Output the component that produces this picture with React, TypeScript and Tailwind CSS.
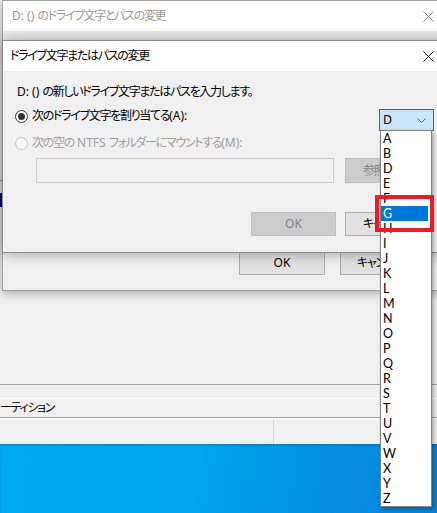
import React from "react";

const letters = ["A","B","D","E","F","G","H","I","J","K","L","M","N","O","P","Q","R","S","T","U","V","W","X","Y","Z"];

function J({ children }: { children: React.ReactNode }) {
  return <span className="tracking-[-1.3px]">{children}</span>;
}

function CloseX({ color }: { color: string }) {
  return (
    <svg width="11" height="11" viewBox="0 0 11 11" className="block">
      <path d="M0.5 0.5 L10.5 10.5 M10.5 0.5 L0.5 10.5" stroke={color} strokeWidth="1" fill="none" />
    </svg>
  );
}

function Radio({ checked, disabled }: { checked?: boolean; disabled?: boolean }) {
  if (disabled) {
    return <div className="w-[13px] h-[13px] rounded-full border border-[#c4c4c4] bg-[#f7f7f7] shrink-0" />;
  }
  return (
    <div className="w-[13px] h-[13px] rounded-full border border-[#333333] bg-white shrink-0 flex items-center justify-center">
      {checked && <div className="w-[7px] h-[7px] rounded-full bg-[#333333]" />}
    </div>
  );
}

export default function App() {
  return (
    <div className="relative w-[437px] h-[513px] overflow-hidden font-['Noto_Sans','Noto_Sans_CJK_JP',sans-serif] [font-feature-settings:'palt'] text-[12px] leading-[16px] text-black">
      {/* background: disk management window + desktop */}
      <div className="flex flex-col h-full">
        <div className="h-[444px] bg-[#f0f0f0] flex flex-col">
          <div className="h-[180px]" />
          <div className="h-px bg-[#a0a0a0]" />
          <div className="h-[12px]" />
          <div className="h-[14px] bg-[#0a0a7a]" />
          <div className="flex-1" />
          <div className="h-px bg-[#a0a0a0]" />
          <div className="h-[13px]" />
          <div className="h-px bg-white" />
          <div className="h-[18px] flex items-center"><J>ーティション</J></div>
          <div className="h-px bg-[#a0a0a0]" />
          <div className="h-px bg-white" />
          <div className="h-[25px] flex">
            <div className="w-[274px] border-r border-[#dadada]" />
          </div>
        </div>
        <div className="flex-1 bg-[linear-gradient(100deg,#00abf1_0%,#00a5ed_45%,#0a80d8_100%)] shadow-[inset_0_2px_2px_rgba(0,0,0,0.15)]" />
      </div>

      {/* outer dialog */}
      <div className="absolute left-[2px] top-0 w-[470px] h-[291px] border border-[#a3a3a3] bg-[#f0f0f0] shadow-[0_2px_10px_rgba(0,0,0,0.3)] flex flex-col">
        <div className="h-[30px] bg-white flex items-center pl-[9px] text-[#9a9a9a]">
          <span>D: () <J>のドライブ文字とパスの変更</J></span>
          <div className="ml-auto mr-[37px]">
            <CloseX color="#9a9a9a" />
          </div>
        </div>
        <div className="flex-1 flex items-end pb-[15px]">
          <div className="flex ml-[236px] gap-[15px]">
            <div className="w-[86px] h-[24px] border border-[#adadad] bg-[#e1e1e1] flex items-center justify-center">OK</div>
            <div className="w-[86px] h-[24px] border border-[#adadad] bg-[#e1e1e1] flex items-center pl-[16px]"><J>キャンセル</J></div>
          </div>
        </div>
      </div>

      {/* inner dialog */}
      <div className="absolute left-[2px] top-[40px] w-[461px] h-[213px] border border-[#8c8c8c] bg-[#f0f0f0] shadow-[0_0_14px_rgba(0,0,0,0.35)] flex flex-col">
        <div className="h-[30px] shrink-0 bg-white flex items-center pl-[7px]">
          <J>ドライブ文字またはパスの変更</J>
          <div className="ml-auto mr-[28px]">
            <CloseX color="#111111" />
          </div>
        </div>
        <div className="flex-1 flex flex-col pl-[12px] pt-[13px]">
          <p className="h-[16px] pl-[2px] whitespace-nowrap">D: () <J>の新しいドライブ文字またはパスを入力します。</J></p>
          <div className="mt-[8px] flex items-start">
            <div className="flex items-center gap-[4px] h-[16px]">
              <Radio checked />
              <span className="whitespace-nowrap"><J>次のドライブ文字を割り当てる</J>(A):</span>
            </div>
            <div className="ml-auto mr-[28px] mt-[1px] w-[55px] h-[22px] border border-[#0078d7] bg-[#cce4f7] flex items-center pl-[3px] pr-[7px]">
              <span className="text-[12.5px]">D</span>
              <svg width="9" height="5" viewBox="0 0 9 5" className="ml-auto">
                <polyline points="0.5,0.5 4.5,4.5 8.5,0.5" stroke="#606060" strokeWidth="1" fill="none" />
              </svg>
            </div>
          </div>
          <div className="mt-[4px] flex items-center gap-[4px] h-[16px] text-[#a0a0a0]">
            <Radio disabled />
            <span className="whitespace-nowrap"><J>次の空の</J> NTFS <J>フォルダーにマウントする</J>(M):</span>
          </div>
          <div className="mt-[7px] flex">
            <div className="ml-[21px] w-[298px] h-[25px] border border-[#cccccc] bg-[#f0f0f0]" />
            <div className="ml-[11px] w-[76px] h-[25px] border border-[#bfbfbf] bg-[#cccccc] flex items-center pl-[17px] text-[#838383] whitespace-nowrap"><J>参照</J>(R)...</div>
          </div>
          <div className="mt-[29px] flex">
            <div className="ml-[236px] w-[85px] h-[24px] border border-[#bfbfbf] bg-[#cccccc] flex items-center justify-center text-[#838383]">OK</div>
            <div className="ml-[9px] w-[85px] h-[24px] border border-[#adadad] bg-[#e1e1e1] flex items-center pl-[17px]"><J>キャンセル</J></div>
          </div>
        </div>
      </div>

      {/* dropdown list */}
      <div className="absolute left-[380px] top-[130px] w-[52px] border border-[#828282] bg-white shadow-[2px_2px_4px_rgba(0,0,0,0.3)] flex flex-col font-['Lato',sans-serif] text-[12.5px]">
        {letters.map((l) => (
          <div
            key={l}
            className={l === "G" ? "h-[15px] leading-[15px] pl-[2px] mr-[3px] bg-[#0078d7] text-white" : "h-[15px] leading-[15px] pl-[2px] mr-[3px] text-black"}
          >
            {l}
          </div>
        ))}
      </div>

      {/* red annotation box */}
      <div className="absolute left-[375px] top-[195px] w-[59px] h-[37px] border-[4px] border-[#f01a24]" />
    </div>
  );
}
